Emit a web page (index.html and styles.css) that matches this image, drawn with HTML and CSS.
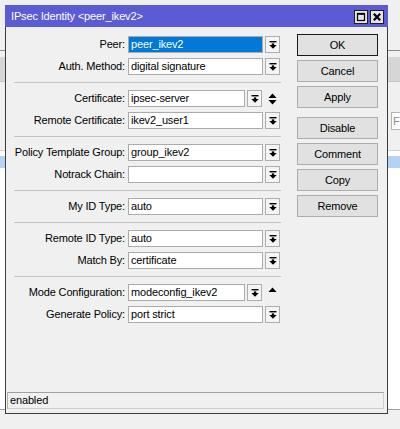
FILE: index.html
```html
<!DOCTYPE html>
<html>
<head>
<meta charset="utf-8">
<title>IPsec Identity</title>
<link rel="stylesheet" href="styles.css">
</head>
<body>
<div class="app">
  <div class="app-top"></div>
  <div class="app-rule"></div>
  <div class="app-gap"></div>
  <div class="app-band"></div>
  <div class="app-mid"><div class="app-find">F</div></div>
  <div class="app-list"><div class="app-sel"></div></div>
  <div class="app-foot"></div>
</div>

<div class="win">
  <div class="titlebar">
    <span class="title">IPsec Identity &lt;peer_ikev2&gt;</span>
    <div class="tbtns">
      <span class="tbtn"><svg width="10" height="10" viewBox="0 0 10 10"><rect x="1.5" y="1.5" width="7" height="7" fill="none" stroke="#000" stroke-width="1.2"/><rect x="1" y="1" width="8" height="1.8" fill="#000"/></svg></span>
      <span class="tbtn"><svg width="10" height="10" viewBox="0 0 10 10"><path d="M1.8 1.8 L8.2 8.2 M8.2 1.8 L1.8 8.2" stroke="#000" stroke-width="2.2" fill="none"/></svg></span>
    </div>
  </div>

  <div class="body">
    <div class="form">
      <div class="row"><span class="lbl">Peer:</span><div class="field"><div class="inp sel">peer_ikev2</div><span class="dd"><svg class="ddi" width="8" height="8" viewBox="0 0 8 8"><rect x="0.5" y="0" width="7" height="1.4"/><rect x="2.8" y="2.4" width="2.4" height="1.8"/><polygon points="0.3,4.1 7.7,4.1 4,7.8"/></svg></span></div></div>
      <div class="row"><span class="lbl">Auth. Method:</span><div class="field"><div class="inp">digital signature</div><span class="dd"><svg class="ddi" width="8" height="8" viewBox="0 0 8 8"><rect x="0.5" y="0" width="7" height="1.4"/><rect x="2.8" y="2.4" width="2.4" height="1.8"/><polygon points="0.3,4.1 7.7,4.1 4,7.8"/></svg></span></div></div>
      <div class="sep"></div>
      <div class="row"><span class="lbl">Certificate:</span><div class="field narrow"><div class="inp">ipsec-server</div><span class="dd"><svg class="ddi" width="8" height="8" viewBox="0 0 8 8"><rect x="0.5" y="0" width="7" height="1.4"/><rect x="2.8" y="2.4" width="2.4" height="1.8"/><polygon points="0.3,4.1 7.7,4.1 4,7.8"/></svg></span></div><span class="extra"><svg width="9" height="14" viewBox="0 0 9 14"><polygon points="0.5,6 8.5,6 4.5,1.5"/><polygon points="0.5,8 8.5,8 4.5,12.5"/></svg></span></div>
      <div class="row"><span class="lbl">Remote Certificate:</span><div class="field"><div class="inp">ikev2_user1</div><span class="dd"><svg class="ddi" width="8" height="8" viewBox="0 0 8 8"><rect x="0.5" y="0" width="7" height="1.4"/><rect x="2.8" y="2.4" width="2.4" height="1.8"/><polygon points="0.3,4.1 7.7,4.1 4,7.8"/></svg></span></div></div>
      <div class="sep"></div>
      <div class="row"><span class="lbl">Policy Template Group:</span><div class="field"><div class="inp">group_ikev2</div><span class="dd"><svg class="ddi" width="8" height="8" viewBox="0 0 8 8"><rect x="0.5" y="0" width="7" height="1.4"/><rect x="2.8" y="2.4" width="2.4" height="1.8"/><polygon points="0.3,4.1 7.7,4.1 4,7.8"/></svg></span></div></div>
      <div class="row"><span class="lbl">Notrack Chain:</span><div class="field"><div class="inp"></div><span class="dd"><svg class="ddi" width="8" height="8" viewBox="0 0 8 8"><rect x="0.5" y="0" width="7" height="1.4"/><rect x="2.8" y="2.4" width="2.4" height="1.8"/><polygon points="0.3,4.1 7.7,4.1 4,7.8"/></svg></span></div></div>
      <div class="sep"></div>
      <div class="row"><span class="lbl">My ID Type:</span><div class="field"><div class="inp">auto</div><span class="dd"><svg class="ddi" width="8" height="8" viewBox="0 0 8 8"><rect x="0.5" y="0" width="7" height="1.4"/><rect x="2.8" y="2.4" width="2.4" height="1.8"/><polygon points="0.3,4.1 7.7,4.1 4,7.8"/></svg></span></div></div>
      <div class="sep"></div>
      <div class="row"><span class="lbl">Remote ID Type:</span><div class="field"><div class="inp">auto</div><span class="dd"><svg class="ddi" width="8" height="8" viewBox="0 0 8 8"><rect x="0.5" y="0" width="7" height="1.4"/><rect x="2.8" y="2.4" width="2.4" height="1.8"/><polygon points="0.3,4.1 7.7,4.1 4,7.8"/></svg></span></div></div>
      <div class="row"><span class="lbl">Match By:</span><div class="field"><div class="inp">certificate</div><span class="dd"><svg class="ddi" width="8" height="8" viewBox="0 0 8 8"><rect x="0.5" y="0" width="7" height="1.4"/><rect x="2.8" y="2.4" width="2.4" height="1.8"/><polygon points="0.3,4.1 7.7,4.1 4,7.8"/></svg></span></div></div>
      <div class="sep"></div>
      <div class="row"><span class="lbl">Mode Configuration:</span><div class="field narrow"><div class="inp">modeconfig_ikev2</div><span class="dd"><svg class="ddi" width="8" height="8" viewBox="0 0 8 8"><rect x="0.5" y="0" width="7" height="1.4"/><rect x="2.8" y="2.4" width="2.4" height="1.8"/><polygon points="0.3,4.1 7.7,4.1 4,7.8"/></svg></span></div><span class="extra"><svg width="9" height="14" viewBox="0 0 9 14"><polygon points="0.5,6 8.5,6 4.5,1.5"/></svg></span></div>
      <div class="row"><span class="lbl">Generate Policy:</span><div class="field"><div class="inp">port strict</div><span class="dd"><svg class="ddi" width="8" height="8" viewBox="0 0 8 8"><rect x="0.5" y="0" width="7" height="1.4"/><rect x="2.8" y="2.4" width="2.4" height="1.8"/><polygon points="0.3,4.1 7.7,4.1 4,7.8"/></svg></span></div></div>
    </div>

    <div class="btns">
      <div class="btn default">OK</div>
      <div class="btn">Cancel</div>
      <div class="btn group-end">Apply</div>
      <div class="btn">Disable</div>
      <div class="btn">Comment</div>
      <div class="btn">Copy</div>
      <div class="btn">Remove</div>
    </div>
  </div>

  <div class="status">enabled</div>
</div>
</body>
</html>
```

FILE: styles.css
```css
* { box-sizing: border-box; }

html, body {
  margin: 0;
  padding: 0;
}

body {
  width: 400px;
  height: 429px;
  overflow: hidden;
  position: relative;
  background: #f0f0f0;
  font-family: "Liberation Sans", Arial, sans-serif;
  font-size: 11px;
  letter-spacing: -0.15px;
  color: #000;
}

/* background application */
.app {
  display: flex;
  flex-direction: column;
  height: 429px;
}
.app-top { height: 50px; background: #f0f0f0; }
.app-rule { height: 1px; background: #8c8c8c; }
.app-gap { height: 6px; background: #f0f0f0; }
.app-band { height: 25px; background: #d6d6d6; border-bottom: 1px solid #c4c4c4; }
.app-mid {
  height: 68px;
  background: #f0f0f0;
  padding: 30px 0 0 391px;
  overflow: hidden;
}
.app-find {
  width: 9px;
  height: 18px;
  border: 1px solid #b4b4b4;
  border-right: none;
  background: #fff;
  color: #8a8a8a;
  padding-left: 1px;
  line-height: 16px;
  overflow: hidden;
}
.app-list {
  height: 259px;
  background: #fff;
  border-top: 1px solid #d0d0d0;
  padding-top: 5px;
}
.app-sel { height: 12px; background: #b2d3f3; }
.app-foot { flex: 1; background: #f0f0f0; border-top: 1px solid #a0a0a0; }

/* dialog window */
.win {
  position: absolute;
  left: 5px;
  top: 5px;
  width: 383px;
  height: 409px;
  border: 1px solid #3b3b3b;
  background: #f0f0f0;
  display: flex;
  flex-direction: column;
}

.titlebar {
  height: 22px;
  background: #5b5bd3;
  display: flex;
  align-items: flex-start;
  justify-content: space-between;
  margin: -1px -1px 0 -1px;
  padding-left: 6px;
  padding-right: 4px;
}
.title {
  color: #fff;
  line-height: 22px;
  font-size: 11px;
  white-space: nowrap;
}
.tbtns {
  display: flex;
  gap: 2px;
  margin-top: 5px;
}
.tbtn {
  width: 14px;
  height: 14px;
  border: 1px solid #1e1e1e;
  background: #e4e4e4;
  display: flex;
  align-items: center;
  justify-content: center;
}

.body {
  flex: 1;
  display: flex;
  align-items: flex-start;
}

.form {
  width: 267px;
  margin: 9px 0 0 8px;
  display: flex;
  flex-direction: column;
  gap: 5px;
}

.row {
  display: flex;
  height: 17px;
}
.lbl {
  width: 111px;
  margin-right: 3px;
  text-align: right;
  white-space: nowrap;
  line-height: 17px;
}
.field {
  width: 152px;
  display: flex;
  gap: 2px;
}
.field.narrow { width: 134px; }
.inp {
  flex: 1;
  height: 17px;
  border: 1px solid #ababab;
  background: #fff;
  padding: 0 2px;
  line-height: 15px;
  white-space: nowrap;
  overflow: hidden;
}
.inp.sel {
  background: #0078d7;
  color: #fff;
}
.dd {
  width: 15px;
  height: 17px;
  border: 1px solid #adadad;
  background: #f4f4f4;
  display: flex;
  align-items: center;
  justify-content: center;
}
.ddi { fill: #000; }
.extra {
  width: 18px;
  display: flex;
  align-items: center;
  padding-left: 6px;
}
.extra svg { fill: #000; }

.sep {
  height: 1px;
  background: #c3c3c3;
  margin: 2px 0;
}

.btns {
  width: 81px;
  margin: 7px 0 0 16px;
  display: flex;
  flex-direction: column;
  gap: 4px;
}
.btn {
  height: 22px;
  border: 1px solid #adadad;
  background: #e1e1e1;
  text-align: center;
  line-height: 20px;
  white-space: nowrap;
}
.btn.default { border-color: #1a1a1a; }
.btn.group-end { margin-bottom: 5px; }

.status {
  height: 17px;
  margin: 0 3px 4px 1px;
  border: 1px solid #cfcfcf;
  border-top-color: #a0a0a0;
  border-left-color: #b0b0b0;
  padding-left: 2px;
  line-height: 15px;
}
```
